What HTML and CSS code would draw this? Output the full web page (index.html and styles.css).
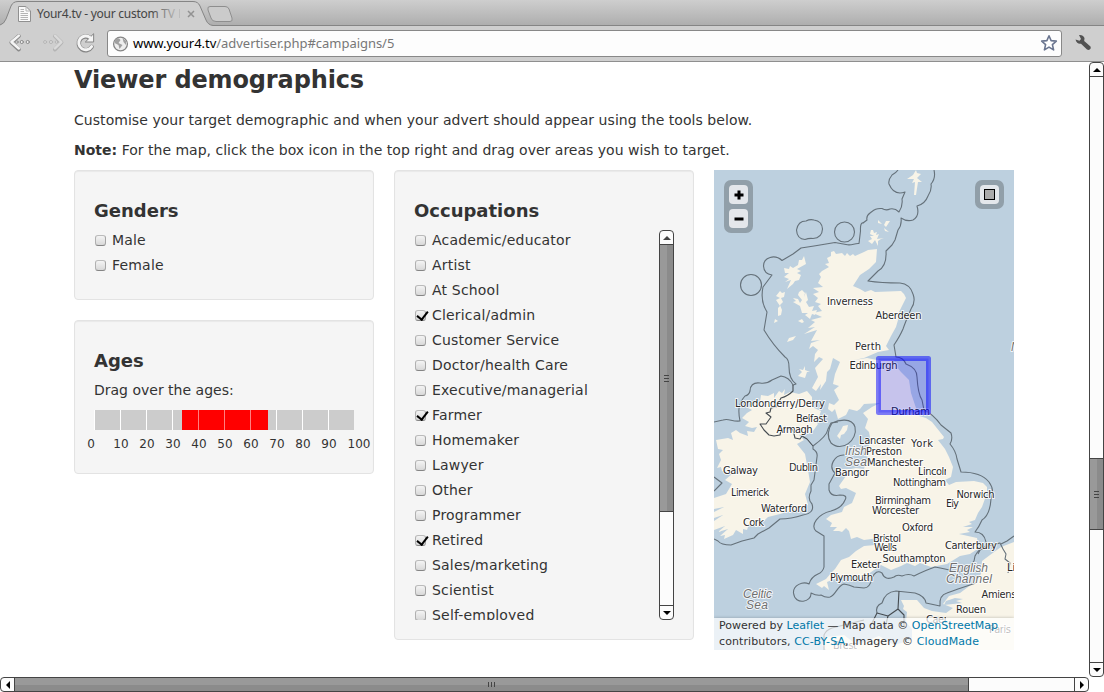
FILE: index.html
```html
<!DOCTYPE html>
<html lang="en">
<head>
<meta charset="utf-8">
<title>Your4.tv - your custom TV</title>
<link rel="stylesheet" href="styles.css">
</head>
<body>
<header class="chrome">
  <svg class="tabs" width="1104" height="26" viewBox="0 0 1104 26">
    <defs>
      <linearGradient id="strip" x2="0" y2="1"><stop stop-color="#cecece"/><stop offset="1" stop-color="#adadad"/></linearGradient>
      <linearGradient id="tabfade" gradientUnits="userSpaceOnUse" x1="150" x2="181"><stop stop-color="#444"/><stop offset="1" stop-color="#cdcdcd"/></linearGradient>
    </defs>
    <rect width="1104" height="26" fill="url(#strip)"/>
    <path d="M0 25.5H1104" stroke="#858585"/>
    <path d="M0 26V25Q4 24 6 19L11 6Q13 1.500 18 1.500H193Q198 1.500 200 6L206 20Q208 25 213 25.500V26Z" fill="#cfcfcf"/>
    <path d="M0 25Q4 24 6 19L11 6Q13 1.500 18 1.500H193Q198 1.500 200 6L206 20Q208 25 213 25.500" fill="none" stroke="#858585"/>
    <path d="M208 10Q207 6.500 210 6.500H225Q228 6.500 229 9L232 18Q233 21.500 230 21.500H216Q212 21.500 211 18Z" fill="#cbcbcb" stroke="#8e8e8e"/>
    <path d="M18.500 6.500H26L30.500 11V21.500H18.500Z" fill="#fafafa" stroke="#909090"/>
    <path d="M26 6.500V11H30M20.500 9.500H24M20.500 11.500H24M20.500 13.500H28M20.500 15.500H28M20.500 17.500H28M20.500 19.500H28" fill="none" stroke="#b4b4b4"/>
    <text class="tab-title" x="37" y="18" fill="url(#tabfade)" textLength="138">Your4.tv - your custom TV</text>
    <path d="M179.500 9V18" stroke="#bdbdbd"/>
    <path d="M188 11L194 17M194 11L188 17" stroke="#929292" stroke-width="1.500"/>
  </svg>
  <div class="toolbar">
    <svg class="nav" width="108" height="35" viewBox="0 27 108 35">
      <g fill="none" stroke-linecap="round" stroke-linejoin="round">
        <path d="M19 37L11.500 43.500L19 50.500" stroke="#8b8b8b" stroke-width="4"/>
        <path d="M19 36.500L11.500 43L19 49.500" stroke="#f5f5f5" stroke-width="2.500"/>
        <g fill="#eee" stroke="#8b8b8b"><circle cx="17" cy="43" r="1.300"/><circle cx="22" cy="43" r="1.600"/><circle cx="28" cy="43" r="1.600"/></g>
        <path d="M55.500 37L62 43.500L55.500 50.500" stroke="#b4b4b4" stroke-width="4"/>
        <path d="M55.500 36.500L62 43L55.500 49.500" stroke="#dadada" stroke-width="2.500"/>
        <g fill="#d8d8d8" stroke="#b4b4b4"><circle cx="45.500" cy="43" r="1.500"/><circle cx="51.500" cy="43" r="1.600"/><circle cx="57" cy="43" r="1.300"/></g>
        <path d="M91 39A7 7 0 1 0 92.500 48" stroke="#858585" stroke-width="4.500"/>
        <path d="M94.500 35V43H86.500Z" fill="#f5f5f5" stroke="#858585"/>
        <path d="M91 38.500A7 7 0 1 0 92.500 47.500" stroke="#f5f5f5" stroke-width="3"/>
      </g>
    </svg>
    <div class="address">
      <svg width="18" height="18" viewBox="0 0 18 18"><circle cx="8.500" cy="9" r="6.900" fill="#eee" stroke="#858585" stroke-width="1.300"/><path d="M3.500 4Q7 2 8.500 5L6.500 8L10.500 10L7.500 14L6.500 10L2.500 8ZM10.500 3L14 6V10L11.500 7Z" fill="#a0a0a0"/></svg>
      <span class="url"><b>www.your4.tv</b>/advertiser.php#campaigns/5</span>
      <svg class="star" width="18" height="18" viewBox="0 0 18 18"><path d="M9 1.800L11.100 6.600L16.300 7.100L12.400 10.600L13.600 15.900L9 13.100L4.400 15.900L5.600 10.600L1.700 7.100L6.900 6.600Z" fill="#fff" stroke="#6b7690" stroke-width="1.600" stroke-linejoin="round"/></svg>
    </div>
    <svg class="wrench" width="18" height="18" viewBox="0 0 18 18"><path d="M1.500 5.500L5.500 6.700L7 5L5 1Q9 .5 10.500 4L10.200 7L16.500 12.500Q17.500 15 14.500 16L13 15.500L7 9.700Q3 10.500 1.500 5.500Z" fill="#525252"/></svg>
  </div>
</header>
<div class="viewport">
  <main class="page">
    <h2>Viewer demographics</h2>
    <p class="intro">Customise your target demographic and when your advert should appear using the tools below.</p>
    <p><strong>Note:</strong> For the map, click the box icon in the top right and drag over areas you wish to target.</p>
    <div class="columns">
      <div class="column">
        <section class="well">
          <h3>Genders</h3>
          <label><i class="box"></i>Male</label>
          <label><i class="box"></i>Female</label>
        </section>
        <section class="well ages">
          <h3>Ages</h3>
          <div class="hint">Drag over the ages:</div>
          <div class="bar"><i></i><i></i><i></i><i></i><i></i><i></i><i></i><i></i><i></i><i></i><span class="range"></span></div>
          <div class="scale"><span>0</span><span>10</span><span>20</span><span>30</span><span>40</span><span>50</span><span>60</span><span>70</span><span>80</span><span>90</span><span>100</span></div>
        </section>
      </div>
      <section class="well occupations">
        <h3>Occupations</h3>
        <div class="scroller">
          <div class="list">
            <label><i class="box"></i>Academic/educator</label>
            <label><i class="box"></i>Artist</label>
            <label><i class="box"></i>At School</label>
            <label><i class="box on"></i>Clerical/admin</label>
            <label><i class="box"></i>Customer Service</label>
            <label><i class="box"></i>Doctor/health Care</label>
            <label><i class="box"></i>Executive/managerial</label>
            <label><i class="box on"></i>Farmer</label>
            <label><i class="box"></i>Homemaker</label>
            <label><i class="box"></i>Lawyer</label>
            <label><i class="box"></i>Other</label>
            <label><i class="box"></i>Programmer</label>
            <label><i class="box on"></i>Retired</label>
            <label><i class="box"></i>Sales/marketing</label>
            <label><i class="box"></i>Scientist</label>
            <label><i class="box"></i>Self-employed</label>
          </div>
          <div class="vbar">
            <b class="cap up"></b><b class="thumb inner-thumb"><i class="grip"></i></b><b class="cap down"></b>
          </div>
        </div>
      </section>
      <div class="map">
        <svg class="chart" width="300" height="480" viewBox="0 0 300 480">
          <rect width="300" height="480" fill="#bdd0df"/>
          <g class="land">
            <path d="M117 82L120 81L122 84L128 83L131 86L133 83L136 86L139 84L141 86L150 82L154 80L163 79L162 92L155 99L146 105L139 116L146 119L151 122L157 120L161 122L187 121L190 124L192 128L188 136L185 142L184 150L182 157L177 166L172 176L175 180L164 182L150 188L140 190L153 188L163 190L177 190L182 196L187 202L195 210L197 223L202 238L205 246L212 248L218 252L230 267L229 269L224 270L231 279L235 287L239 297L237 307L231 310L235 315L242 312L260 311L269 313L273 317L273 323L268 337L264 343L261 350L255 352L258 354L249 357L259 357L253 360L256 362L245 364L263 368L265 378L256 384L246 386L233 394L217 397L206 393L201 396L193 393L187 396L177 400L167 395L160 400L153 405L147 410L140 405L135 407L127 406L123 408L118 410L113 412L115 420L110 416L108 418L102 414L112 409L117 403L121 399L127 390L135 387L142 381L150 376L161 375L168 371L161 371L165 368L150 370L143 367L137 369L135 361L132 358L128 362L125 361L119 361L123 357L116 357L118 353L112 349L117 345L128 342L130 337L138 333L142 323L132 318L127 319L125 316L127 313L132 306L137 304L123 303L123 299L137 299L142 298L150 299L152 292L156 288L152 286L151 280L155 276L153 272L156 268L155 262L151 258L154 249L149 243L158 237L166 233L150 234L146 239L143 241L135 239L132 245L124 249L121 239L118 242L114 239L115 233L120 235L125 230L120 220L125 216L119 214L121 204L126 192L119 188L116 199L113 202L112 211L106 220L107 214L102 221L98 218L104 207L101 198L109 189L105 187L100 192L101 184L104 180L99 176L95 179L97 173L106 170L97 171L103 160L90 164L101 157L94 158L101 152L97 150L108 147L99 143L108 141L104 136L107 134L101 132L104 128L99 124L105 122L99 118L109 117L104 113L107 107L105 104L108 101L115 97L111 94L115 93L113 88L117 86Z"/>
            <path d="M47 225L54 226L60 223L60 228L65 221L68 223L71 219L70 225L76 222L85 224L93 221L98 227L98 237L107 241L104 250L100 249L104 254L99 261L96 263L85 265L90 270L83 274L91 284L94 300L96 312L91 324L94 335L88 336L87 341L83 339L66 344L54 347L43 357L35 354L33 360L29 359L29 364L22 360L19 365L10 369L11 365L6 366L14 359L4 362L11 356L0 360V351L9 345L0 348V342L10 337L0 339V328L12 324L18 314L11 310L18 304L8 301L7 297L3 298L7 290L5 284L9 280L4 279L2 270L14 268L19 270L17 263L22 260L26 263L34 266L33 261L40 262L43 257L38 258L31 256L35 252L28 248L33 243L38 240L34 238L40 235L42 231L46 232Z"/>
            <path d="M90 86L88 90L85 90L84 95L79 98L76 96L75 99L70 98L71 103L75 103L70 107L75 109L71 112L77 110L73 119L79 114L81 111L85 110L87 105L83 103L87 101L83 99L92 94ZM66 121L68 123L71 122L70 127L67 128L69 132L66 135L68 140L67 145L64 146L64 138L66 136L62 130L66 128L62 126ZM61 149L64 151L60 153ZM88 120L91 123L90 127L92 122L94 130L92 132L95 137L100 136L98 141L103 140L101 145L98 144L96 149L91 145L94 143L88 143L86 136L79 132L82 131L79 128L84 129L86 133L88 130L84 125L85 122ZM84 151L88 149L90 152L88 153ZM82 166L79 170L73 172L75 168ZM91 196L89 200L85 199L88 202L84 206L91 208L93 202L96 202L91 200Z"/>
            <path d="M159 60L160 63L163 62L162 65L165 64L163 69L170 68L167 69L164 71L164 76L161 70L158 74L154 71L158 69L156 66L160 66L156 64L157 60ZM164 50L166 52L168 54L164 53ZM172 51L176 51L172 57L170 55ZM170 58L175 62L171 61ZM202 0L203 3L207 4L203 8L208 12L204 12L202 25L200 25L201 12L198 13L200 9L193 9L199 5Z"/>
            <path d="M134 255L133 260L130 264L127 265L126 269L123 266L127 260L129 256Z"/>
            <path d="M300 372L287 377L276 385L268 391L267 404L258 414L246 423L235 426L229 434L239 438L232 443L218 441L210 438L203 430L187 430L190 436L189 439L193 442L192 452L198 459L198 470L180 475L165 466L150 472L143 475L130 465L112 467L108 475L112 480H300Z"/>
          </g>
          <path class="inlet" d="M241 428L232 431L230 435L248 433L242 431L249 429Z"/>
          <g class="borders">
            <path d="M92 51Q96 49 100 50Q108 51 108.500 59Q108 68 99 68.500Q95 68 91 69.500Q83 69 82.500 60Q84 51 92 51Z"/>
            <circle cx="130.500" cy="62" r="10"/><circle cx="37" cy="115" r="10.500"/>
            <path d="M149.500 53Q146 52 146.500 61L145 73.500C140 73 138 76 132 74.500L121 72.500L100 76L87 78L79 84L68 90.500C61 84 49.500 87 49.500 96Q50 104 58 105L49 117Q46 131 53 142L50 160Q59 175 71 187Q75 189 75 197Q75 209 82 214L79 215Q75 207 67 206L58 210Q53 214 46 213C39 212 36 216 36 221Q35 225 31 226C24 234 24 241 26 251C18 252 15 248 9 250L0 252"/>
            <path class="frontier" d="M79 215V221Q74 226 67 228L62 237L57 238L56 242L52 243L57 247L52 254H46L50 260L55 265L60 266L66 265L67 261L71 257L79 260L81 268L86 269L88 266L93 269L99 276"/>
            <path d="M99 276Q113 266 114 259L117 253L124 252"/>
            <path d="M99 276L99 279Q104 282 103 287L100 310L97 315V321Q93 329 98 334Q101 343 89 345Q77 349 66 349L55 358L44 364L40 368L28 371L17 375Q7 375 4 371L0 369"/>
            <path d="M118 253Q111 264 117 273C128 283 144 270 141 257C138 247 124 250 118 253Z"/>
            <path d="M131 285C120 284 114 297 121 303L115 314V320Q117 327 126 325Q134 325 131 330Q128 338 117 341C104 344 96 355 102 361L110 366V397Q109 402 104 404Q97 407 95 414C89 411 79 415 79.500 423C81 436 98 432 97 423Q103 426 107 425Q112 428 116 427C122 425 123 416 130 414Q136 415 140 417L150 418"/>
            <path d="M184 0Q182 3 178 5Q174 10 175 14Q180 26 191 22L188 29Q189 36 185 42Q181 38 176 39Q172 41 168 38.500C162 38 160 40 156 43Q152 46 153 50L149 53"/>
            <path d="M220 0Q222 8 217 14Q218 20 214 26Q211 34 203 36Q206 46 199 50Q193 52 187 48Q188 55 184 60L181 70L178 75L172 81Q173 96 164 101Q159 106 154 111Q167 113 186 113Q196 114 199 124Q202 132 197 139Q191 153 189 159Q186 166 180 175L182 187Q189 187 192 194Q203 198 203 207Q204 224 208 230L210 240Q219 244 227 255L237 263Q239 269 236 274Q242 281 243 289L247 302Q267 302 275 312Q281 320 277 329Q276 345 268 350Q265 357 261 362Q270 362 272 372Q273 377 266 380L264 384"/>
            <path d="M287 374L293 371L300 366"/>
            <path d="M150 418Q156 418 158 408Q162 399 168 403Q171 411 180 407Q183 404 188 406Q195 403 200 406Q212 400 221 397Q232 399 239 401L246 402Q255 398 260 391L261 386Q264 379 274 376L286 373L289 379L292 384L291 389L296 393L294 403"/>
            <path d="M163 443Q161 436 168 433Q171 422 182 421L201 423Q211 426 212 433L226 436Q225 425 233 423L244 419L262 413"/>
            <path class="frontier" d="M185 421L184 439L190 445V457M184 439L174 446L163 443L157 455M174 446L171 458M110 480V465Q112 460 118 458L150 450"/>
            <path d="M0 307L8 313L0 321"/>
          </g>
          <g class="places">
            <text x="113" y="134.500" textLength="46">Inverness</text><text x="161.500" y="149" textLength="46">Aberdeen</text>
            <text x="141" y="180" textLength="26">Perth</text><text x="135.500" y="199" textLength="48">Edinburgh</text>
            <text x="21" y="237" textLength="90">Londonderry/Derry</text><text x="82" y="252" textLength="31">Belfast</text><text x="62.500" y="262.500" textLength="36">Armagh</text>
            <text x="177" y="245" textLength="39">Durham</text><text x="145" y="273.500" textLength="46">Lancaster</text><text x="197" y="277" textLength="22">York</text>
            <g class="water"><text x="131" y="285" textLength="22">Irish</text><text x="131" y="296" textLength="22">Sea</text></g>
            <text x="152" y="284.500" textLength="36">Preston</text><text x="153" y="295.500" textLength="56">Manchester</text>
            <text x="121" y="305.500" textLength="34">Bangor</text><text x="9" y="304" textLength="35">Galway</text><text x="75" y="301" textLength="29">Dublin</text>
            <svg width="232" height="480"><text x="204" y="305" textLength="32">Lincoln</text></svg><text x="179" y="316" textLength="53">Nottingham</text>
            <text x="17" y="326" textLength="38">Limerick</text><text x="47" y="342" textLength="46">Waterford</text><text x="29" y="355.500" textLength="21">Cork</text>
            <text x="242.500" y="328" textLength="38">Norwich</text><text x="232" y="337" textLength="13">Ely</text>
            <text x="161" y="334" textLength="56">Birmingham</text><text x="158" y="344" textLength="47">Worcester</text><text x="188" y="361" textLength="31">Oxford</text>
            <text x="159" y="371.500" textLength="28">Bristol</text><text x="160" y="380.500" textLength="23">Wells</text><text x="231" y="378.500" textLength="52">Canterbury</text>
            <text x="168.500" y="392" textLength="63">Southampton</text><text x="137" y="398" textLength="30">Exeter</text><text x="116" y="411" textLength="43">Plymouth</text>
            <text x="293" y="401">Lille</text><text x="267.500" y="427.500" textLength="35">Amiens</text><text x="242" y="443" textLength="30">Rouen</text><svg width="232" height="480"><text x="212" y="453" textLength="24">Caen</text></svg><text x="275" y="463" textLength="22">Paris</text><text x="119" y="479" textLength="24">Brest</text>
            <g class="water"><text x="29" y="428" textLength="29">Celtic</text><text x="32" y="439" textLength="22">Sea</text><text x="235" y="402" textLength="39">English</text><text x="232" y="413" textLength="46">Channel</text><text x="297" y="181">N</text></g>
          </g>
          <rect class="selection" x="164.500" y="188.500" width="50" height="54"/>
        </svg>
        <div class="controls zoom">
          <button><svg width="10" height="10" viewBox="0 0 10 10"><path d="M5 .5V9.500M.5 5H9.500" stroke="#000" stroke-width="3"/></svg></button>
          <button><svg width="10" height="10" viewBox="0 0 10 10"><path d="M.5 5H9.500" stroke="#000" stroke-width="3"/></svg></button>
        </div>
        <div class="controls draw"><button><i></i></button></div>
        <div class="credit">Powered by <a>Leaflet</a> — Map data © <a>OpenStreetMap</a><br><span class="second">contributors, <a>CC-BY-SA</a>, Imagery © <a>CloudMade</a></span></div>
      </div>
    </div>
  </main>
  <div class="vbar"><b class="cap up"></b><b class="thumb page-thumb"><i class="grip"></i></b><b class="cap down"></b></div>
</div>
<div class="hbar"><b class="cap left"></b><b class="thumb page-hthumb"><i class="grip"></i></b><b class="cap right"></b></div>
</body>
</html>
```
FILE: styles.css
```css
* { box-sizing: border-box; }
body { margin: 0; width: 1104px; height: 692px; overflow: hidden; display: flex; flex-direction: column; background: #fff; color: #333; font: 14px/20px "DejaVu Sans", sans-serif; }

/* browser frame */
.chrome { flex: none; height: 62px; background: #cfcfcf; border-bottom: 1px solid #8f8f8f; }
.tabs { display: block; }
.tab-title { font: 12px "Noto Sans", sans-serif; }
.toolbar { display: flex; height: 35px; }
.nav { flex: none; width: 107px; }
.address { width: 955px; height: 27px; margin-top: 4px; display: flex; align-items: center; padding: 0 3px 0 4px; background: #fdfdfd; border: 1px solid #888; border-radius: 3px; }
.url { font: 13px "Noto Sans", sans-serif; letter-spacing: -.04px; color: #777; margin-left: 3px; padding-bottom: 2px; }
.url b { font-weight: 400; color: #000; }
.star { margin: -2px 0 0 auto; }
.wrench { margin: 8px 0 0 12px; }

/* page content */
.viewport { flex: none; height: 615px; display: flex; justify-content: space-between; }
.page { padding-left: 74px; width: 1014px; }
h2 { margin: 0 0 12px; font-size: 24px; line-height: 36px; letter-spacing: -.13px; }
p { margin: 0 0 10px; white-space: nowrap; letter-spacing: .01px; }
.intro { letter-spacing: .05px; }
h3 { margin: 0; padding-top: 2px; height: 40px; font-size: 18px; line-height: 38px; }
.columns { display: flex; gap: 20px; width: 940px; align-items: flex-start; }
.column { display: flex; flex-direction: column; gap: 20px; }
.well { width: 300px; padding: 19px; background: #f5f5f5; border: 1px solid #e3e3e3; border-radius: 4px; box-shadow: inset 0 1px 1px rgba(0,0,0,.05); }
label { display: flex; align-items: center; height: 20px; margin-bottom: 5px; letter-spacing: .19px; }
.box { flex: none; width: 11px; height: 11px; margin: 1px 6px 0 1px; border: 1px solid #999; border-color: #bbb #a5a5a5 #858585 #b0b0b0; border-radius: 3px; background: linear-gradient(#f4f4f4, #d8d8d8); }
.box.on::after { content: ""; display: block; width: 5px; height: 9px; margin: -2px 0 0 3px; border: solid #000; border-width: 0 2px 2px 0; transform: rotate(38deg); }
.ages { height: 154px; }
.bar { position: relative; display: flex; height: 20px; margin-top: 10px; }
.bar i { width: 26px; background: #ccc; border-left: 1px solid #fff; }
.range { position: absolute; left: 88px; top: 0; width: 86px; height: 20px; background: linear-gradient(#ff8080, #ff8080) 16px 0 / 1px 20px no-repeat, linear-gradient(#ff8080, #ff8080) 42px 0 / 1px 20px no-repeat, linear-gradient(#ff8080, #ff8080) 68px 0 / 1px 20px no-repeat, red; }
.scale { display: flex; margin: 4px 0 0 -16px; font-size: 12px; line-height: 20px; }
.scale span { flex: none; width: 26px; text-align: center; }
.scale span:first-child { margin-right: 4px; }
.scale span:last-child { margin-left: 4px; }
.occupations { height: 470px; }
.scroller { display: flex; height: 390px; overflow: hidden; }
.list { flex: 1; }

/* scroll bars */
.vbar { flex: none; width: 15px; display: flex; flex-direction: column; border: 1px solid #444; border-radius: 4px; background: #fcfcfc; }
.hbar { flex: none; width: 1089px; height: 15px; display: flex; border: 1px solid #444; border-radius: 4px; background: #fcfcfc; }
.cap { flex: none; width: 13px; height: 14px; display: flex; align-items: center; justify-content: center; }
.hbar .cap { width: 14px; height: 13px; }
.cap::before { content: ""; border: 4px solid transparent; }
.up::before { border-top: 0; border-bottom-color: #000; }
.down::before { border-bottom: 0; border-top-color: #000; }
.left::before { border-left: 0; border-right-color: #000; }
.right::before { border-right: 0; border-left-color: #000; }
.up { border-bottom: 1px solid #444; }
.down { margin-top: auto; border-top: 1px solid #444; }
.left { border-right: 1px solid #444; }
.right { margin-left: auto; border-left: 1px solid #444; }
.scroller .up::before { border-bottom-color: #444; }
.thumb { display: flex; align-items: center; justify-content: center; background: linear-gradient(90deg, #999 55%, #8b8b8b 55%); }
.inner-thumb { height: 267px; border-bottom: 1px solid #444; }
.page-thumb { height: 72px; margin-top: 381px; border: solid #444; border-width: 1px 0; }
.page-hthumb { width: 954px; border-right: 1px solid #444; background: linear-gradient(#999 55%, #8b8b8b 55%); }
.grip { width: 5px; height: 7px; background: repeating-linear-gradient(#444 0 1px, transparent 1px 3px); }
.hbar .grip { width: 7px; height: 5px; background: repeating-linear-gradient(90deg, #444 0 1px, transparent 1px 3px); }

/* map */
.map { position: relative; width: 300px; height: 480px; overflow: hidden; }
.chart { display: block; }
.land path { fill: #f8f4e8; }
.inlet { fill: #bdd0df; }
.borders { fill: none; stroke: #65717a; stroke-width: 1.100; stroke-linejoin: round; }
.frontier { stroke: #454b50; }
.places { font: 10px "DejaVu Sans", sans-serif; fill: #292929; stroke: #fff; stroke-opacity: .8; stroke-width: 2px; paint-order: stroke; stroke-linejoin: round; }
.water { font: italic 12px "Liberation Sans", sans-serif; fill: #707070; }
.selection { fill: rgba(0,0,255,.2); stroke: rgba(0,0,255,.5); stroke-width: 5; stroke-linejoin: round; }
.controls { position: absolute; top: 10px; width: 29px; padding: 5px; display: flex; flex-direction: column; gap: 5px; border-radius: 7px; background: #919fa9; }
.zoom { left: 10px; }
.draw { right: 10px; }
.controls button { width: 19px; height: 19px; padding: 0; display: flex; align-items: center; justify-content: center; border: 0; border-radius: 4px; background: #e4e7eb; }
.draw i { width: 11px; height: 11px; border: 1px solid #000; background: #aaa; }
.credit { position: absolute; left: 0; right: 0; bottom: 0; height: 32px; padding-left: 5px; background: rgba(255,255,255,.7); box-shadow: 0 0 3px rgba(0,0,0,.25); font-size: 11px; line-height: 16px; letter-spacing: .02px; white-space: nowrap; }
.second { letter-spacing: .1px; }
.credit a { color: #0078a8; }
```
